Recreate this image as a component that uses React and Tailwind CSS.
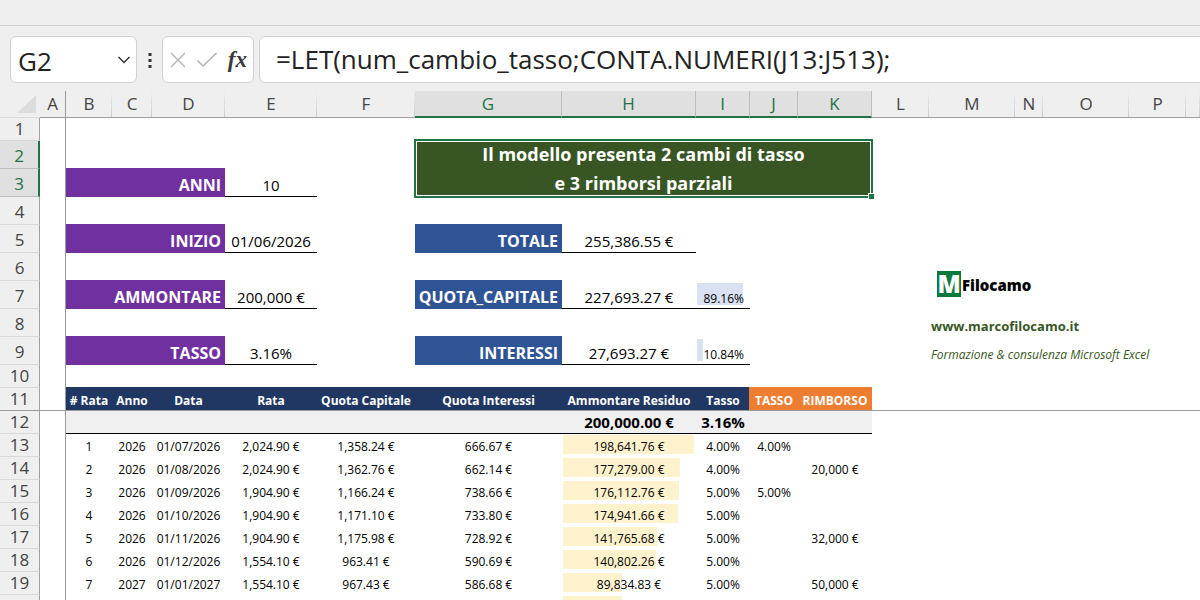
import React from "react";

const COLUMNS = [
  { id: "A", width: "w-[26px]" },
  { id: "B", width: "w-[46px]" },
  { id: "C", width: "w-[40px]" },
  { id: "D", width: "w-[73px]" },
  { id: "E", width: "w-[92px]" },
  { id: "F", width: "w-[98px]" },
  { id: "G", width: "w-[147px]", selected: true },
  { id: "H", width: "w-[134px]", selected: true },
  { id: "I", width: "w-[54px]", selected: true },
  { id: "J", width: "w-[48px]", selected: true },
  { id: "K", width: "w-[74px]", selected: true },
  { id: "L", width: "w-[57px]" },
  { id: "M", width: "w-[86px]" },
  { id: "N", width: "w-[28px]" },
  { id: "O", width: "w-[86px]" },
  { id: "P", width: "w-[57px]" },
  { id: "", width: "w-auto" },
];

const SCHEDULE = [
  ["1", "2026", "01/07/2026", "2,024.90 €", "1,358.24 €", "666.67 €", 198641.76, "198,641.76 €", "4.00%", "4.00%", ""],
  ["2", "2026", "01/08/2026", "2,024.90 €", "1,362.76 €", "662.14 €", 177279.0, "177,279.00 €", "4.00%", "", "20,000 €"],
  ["3", "2026", "01/09/2026", "1,904.90 €", "1,166.24 €", "738.66 €", 176112.76, "176,112.76 €", "5.00%", "5.00%", ""],
  ["4", "2026", "01/10/2026", "1,904.90 €", "1,171.10 €", "733.80 €", 174941.66, "174,941.66 €", "5.00%", "", ""],
  ["5", "2026", "01/11/2026", "1,904.90 €", "1,175.98 €", "728.92 €", 141765.68, "141,765.68 €", "5.00%", "", "32,000 €"],
  ["6", "2026", "01/12/2026", "1,554.10 €", "963.41 €", "590.69 €", 140802.26, "140,802.26 €", "5.00%", "", ""],
  ["7", "2027", "01/01/2027", "1,554.10 €", "967.43 €", "586.68 €", 89834.83, "89,834.83 €", "5.00%", "", "50,000 €"],
  ["", "", "", "", "", "", 89834.83, "", "", "", ""],
];

function FormulaBar() {
  return (
    <header className="border-t border-[#d0d0d0] mt-[25px] flex h-[66px] shrink-0 items-start pt-[10px] pl-[10px] text-[#222]">
      <div className="flex h-[47px] w-[127px] items-center rounded-md border border-[#d0d0d0] bg-white">
        <input
          aria-label="Casella nome"
          defaultValue="G2"
          className="w-0 min-w-0 flex-1 bg-transparent pt-[2px] pl-[7px] text-[26px] leading-8 outline-none"
        />
        <button type="button" aria-label="Apri elenco nomi" className="flex h-full w-6 items-center justify-center">
          <svg width="14" height="8" viewBox="0 0 14 8" fill="none" stroke="#333" strokeWidth="1.5">
            <path d="M1.500 1l5.500 5.500L12.500 1" />
          </svg>
        </button>
      </div>
      <div className="flex h-[47px] w-[25px] items-center justify-center">
        <svg width="4" height="16" viewBox="0 0 4 16" fill="#333">
          <path d="M.5 1h3v3h-3zM.5 7h3v3h-3zM.5 13h3v3h-3z" />
        </svg>
      </div>
      <div className="flex h-[47px] w-[92px] items-center justify-between rounded-md border border-[#d0d0d0] bg-white px-[6px]">
        <button type="button" aria-label="Annulla">
          <svg width="18" height="18" viewBox="0 0 18 18" fill="none" stroke="#b4b4b4" strokeWidth="1.4">
            <path d="M2 2l14 14M16 2L2 16" />
          </svg>
        </button>
        <button type="button" aria-label="Invio">
          <svg width="22" height="18" viewBox="0 0 22 18" fill="none" stroke="#b4b4b4" strokeWidth="1.6">
            <path d="M1.500 9.500l5.500 5.500L20.500 2" />
          </svg>
        </button>
        <button
          type="button"
          aria-label="Inserisci funzione"
          className="font-['Liberation_Serif',serif] text-[23px] leading-6 font-bold text-[#3a3a3a] italic"
        >
          fx
        </button>
      </div>
      <div className="-mr-2 ml-[5px] flex h-[47px] min-w-0 flex-1 items-center rounded-md border border-[#d0d0d0] bg-white">
        <input
          aria-label="Barra della formula"
          defaultValue="=LET(num_cambio_tasso;CONTA.NUMERI(J13:J513);"
          className="min-w-0 flex-1 bg-transparent pb-[2px] pl-4 text-[26px] leading-8 outline-none"
        />
      </div>
    </header>
  );
}

function RowHead({ n, tall, selected }) {
  const tone = selected
    ? "border-r-2 border-r-[#217346] border-b-[#bdbdbd] bg-[#e0e0e0] text-[#217346]"
    : "border-r border-r-[#a0a0a0] border-b-[#d9d9d9] bg-[#efefef] text-[#444]";
  const freeze = n === 11 ? "border-b-[#9b9b9b]!" : "";
  return (
    <th scope="row" className={`border-b p-0 text-[17px] leading-5 font-normal ${tall ? "pt-[3px]" : ""} ${tone} ${freeze}`}>
      {n}
    </th>
  );
}

function Row({ n, tall, selected, children }) {
  return (
    <tr className={tall ? "h-[28px]" : "h-[23px]"}>
      <RowHead n={n} tall={tall} selected={selected} />
      <td className={`border-r border-[#9b9b9b] p-0 ${n === 11 ? "border-b" : ""}`}></td>
      {children}
    </tr>
  );
}

function Label({ color, span, children }) {
  return (
    <th scope="row" colSpan={span} className={`p-0 pr-1 text-right align-bottom text-[16px] leading-6 font-bold text-white ${color}`}>
      {children}
    </th>
  );
}

const PURPLE = "bg-[#7030a0] shadow-[0_-1px_0_#7030a0]";
const BLUE = "bg-[#2f5496] shadow-[0_-1px_0_#2f5496]";

function Value({ children }) {
  return <td className="border-b border-black p-0 text-center align-bottom text-[15px] leading-[22px] text-black">{children}</td>;
}

function Share({ value, children }) {
  return (
    <td className="relative border-b border-black p-0 pr-[6px] text-right align-bottom text-[12px] leading-[18px] text-black">
      <span className="absolute inset-x-px top-[2px] bottom-[3px]">
        <span className="block h-full bg-[#d9e1f2]" style={{ width: `${value}%` }}></span>
      </span>
      <span className="relative">{children}</span>
    </td>
  );
}

function Blank({ span = 1 }) {
  return <td colSpan={span} className="p-0"></td>;
}

function Head({ orange, children }) {
  const tone = orange
    ? "bg-[#ed7d31] shadow-[-1px_-1px_0_#ed7d31,0_-1px_0_#ed7d31]"
    : "bg-[#203764] shadow-[0_-1px_0_#203764]";
  return (
    <th scope="col" className={`border-b border-[#9b9b9b] p-0 pt-1 text-center text-[12px] leading-[18px] font-bold text-white ${tone}`}>
      {children}
    </th>
  );
}

function ScheduleRow({ n, data }) {
  const [num, year, date, rate, capital, interest, residual, residualText, pct, newRate, refund] = data;
  const cell = "p-0 pt-[2px] text-center text-[12px] leading-5";
  return (
    <Row n={n}>
      {[num, year, date, rate, capital, interest].map((t, i) => (
        <td key={i} className={cell}>{t}</td>
      ))}
      <td className={`relative ${cell}`}>
        <span className="absolute inset-x-px top-px bottom-[3px]">
          <span className="block h-full bg-[#fff2cc]" style={{ width: `${residual / 2000}%` }}></span>
        </span>
        <span className="relative">{residualText}</span>
      </td>
      {[pct, newRate, refund].map((t, i) => (
        <td key={i} className={cell}>{t}</td>
      ))}
      <Blank span={6} />
    </Row>
  );
}

function Logo() {
  return (
    <div className="absolute top-[18px] left-2 flex items-center">
      <span className="flex h-[26px] w-6 items-center justify-center bg-[#0b7a3e] font-['Open_Sans',sans-serif] text-[24px] leading-[26px] font-extrabold text-white">
        M
      </span>
      <span className="pt-[2px] pl-px font-['Open_Sans',sans-serif] text-[15px] leading-5 font-extrabold text-black">Filocamo</span>
    </div>
  );
}

export default function App() {
  return (
    <div className="flex h-screen flex-col overflow-hidden bg-[#efefef] font-['Open_Sans','Noto_Sans',sans-serif]">
      <FormulaBar />
      <main className="min-h-0 flex-1 overflow-hidden bg-white">
        <table className="w-full table-fixed border-separate border-spacing-0 whitespace-nowrap text-black">
          <colgroup>
            <col className="w-[40px]" />
            {COLUMNS.map((c) => (
              <col key={c.id} className={c.width} />
            ))}
          </colgroup>
          <thead>
            <tr className="h-[27px]">
              <td className="border-b border-[#d9d9d9] bg-[#efefef] p-0">
                <svg className="ml-[17px]" width="19" height="18" viewBox="0 0 19 18" fill="#dcdcdc">
                  <path d="M19 0v18H0z" />
                </svg>
              </td>
              {COLUMNS.map((c) => (
                <th
                  key={c.id}
                  scope="col"
                  className={`p-0 text-[17px] leading-5 font-normal ${
                    c.selected
                      ? "border-r border-b-2 border-r-[#bdbdbd] border-b-[#217346] bg-[#e0e0e0] pt-px text-[#217346]"
                      : c.id === "A"
                        ? "border-r border-b border-[#9b9b9b] bg-[#efefef] text-[#444]"
                        : "border-b border-b-[#a0a0a0] bg-[#efefef] bg-[linear-gradient(#efefef,#cccccc)] bg-[length:1px_100%] bg-right bg-no-repeat text-[#444]"
                  }`}
                >
                  {c.id}
                </th>
              ))}
            </tr>
          </thead>
          <tbody>
            <Row n={1}><Blank span={16} /></Row>
            <Row n={2} tall selected>
              <Blank span={5} />
              <td
                colSpan={5}
                rowSpan={2}
                className="relative bg-[#375623] p-0 text-center text-[18px] leading-[29px] font-bold text-white"
              >
                <div className="-my-px">Il modello presenta 2 cambi di tasso<br />e 3 rimborsi parziali</div>
                <div className="absolute -inset-x-px -top-[2px] -bottom-px border-2 border-[#217346]">
                  <div className="h-full border border-white"></div>
                </div>
                <div className="absolute -right-[2px] -bottom-[2px] size-[6px] border-t border-l border-white bg-[#217346]"></div>
              </td>
              <Blank span={6} />
            </Row>
            <Row n={3} tall selected>
              <Label span={3} color={PURPLE}>ANNI</Label>
              <Value>10</Value>
              <Blank />
              <Blank span={6} />
            </Row>
            <Row n={4} tall><Blank span={16} /></Row>
            <Row n={5} tall>
              <Label span={3} color={PURPLE}>INIZIO</Label>
              <Value>01/06/2026</Value>
              <Blank />
              <Label color={BLUE}>TOTALE</Label>
              <Value>255,386.55 €</Value>
              <Blank span={9} />
            </Row>
            <Row n={6} tall>
              <Blank span={11} />
              <td colSpan={5} className="relative p-0"><Logo /></td>
            </Row>
            <Row n={7} tall>
              <Label span={3} color={PURPLE}>AMMONTARE</Label>
              <Value>200,000 €</Value>
              <Blank />
              <Label color={BLUE}>QUOTA_CAPITALE</Label>
              <Value>227,693.27 €</Value>
              <Share value={89.16}>89.16%</Share>
              <Blank span={8} />
            </Row>
            <Row n={8} tall>
              <Blank span={11} />
              <td colSpan={5} className="p-0 pl-[2px] align-bottom text-[13px] leading-[22px] font-bold text-[#375623]">
                <a href="https://www.marcofilocamo.it">www.marcofilocamo.it</a>
              </td>
            </Row>
            <Row n={9} tall>
              <Label span={3} color={PURPLE}>TASSO</Label>
              <Value>3.16%</Value>
              <Blank />
              <Label color={BLUE}>INTERESSI</Label>
              <Value>27,693.27 €</Value>
              <Share value={10.84}>10.84%</Share>
              <Blank span={2} />
              <Blank />
              <td colSpan={5} className="p-0 pl-[2px] align-bottom text-[12px] leading-5 text-[#375623] italic">
                Formazione &amp; consulenza Microsoft Excel
              </td>
            </Row>
            <Row n={10}><Blank span={16} /></Row>
            <Row n={11}>
              <Head># Rata</Head>
              <Head>Anno</Head>
              <Head>Data</Head>
              <Head>Rata</Head>
              <Head>Quota Capitale</Head>
              <Head>Quota Interessi</Head>
              <Head>Ammontare Residuo</Head>
              <Head>Tasso</Head>
              <Head orange>TASSO</Head>
              <Head orange>RIMBORSO</Head>
              <td colSpan={6} className="border-b border-[#9b9b9b] p-0"></td>
            </Row>
            <Row n={12}>
              <td colSpan={6} className="border-b border-black bg-[#f0f0f0] p-0"></td>
              <td className="border-b border-black bg-[#f0f0f0] p-0 text-center text-[15px] leading-5 font-bold">200,000.00 €</td>
              <td className="border-b border-black bg-[#f0f0f0] p-0 text-center text-[15px] leading-5 font-bold">3.16%</td>
              <td colSpan={2} className="border-b border-black bg-[#f0f0f0] p-0"></td>
              <Blank span={6} />
            </Row>
            {SCHEDULE.map((data, i) => (
              <ScheduleRow key={i} n={13 + i} data={data} />
            ))}
          </tbody>
        </table>
      </main>
    </div>
  );
}
